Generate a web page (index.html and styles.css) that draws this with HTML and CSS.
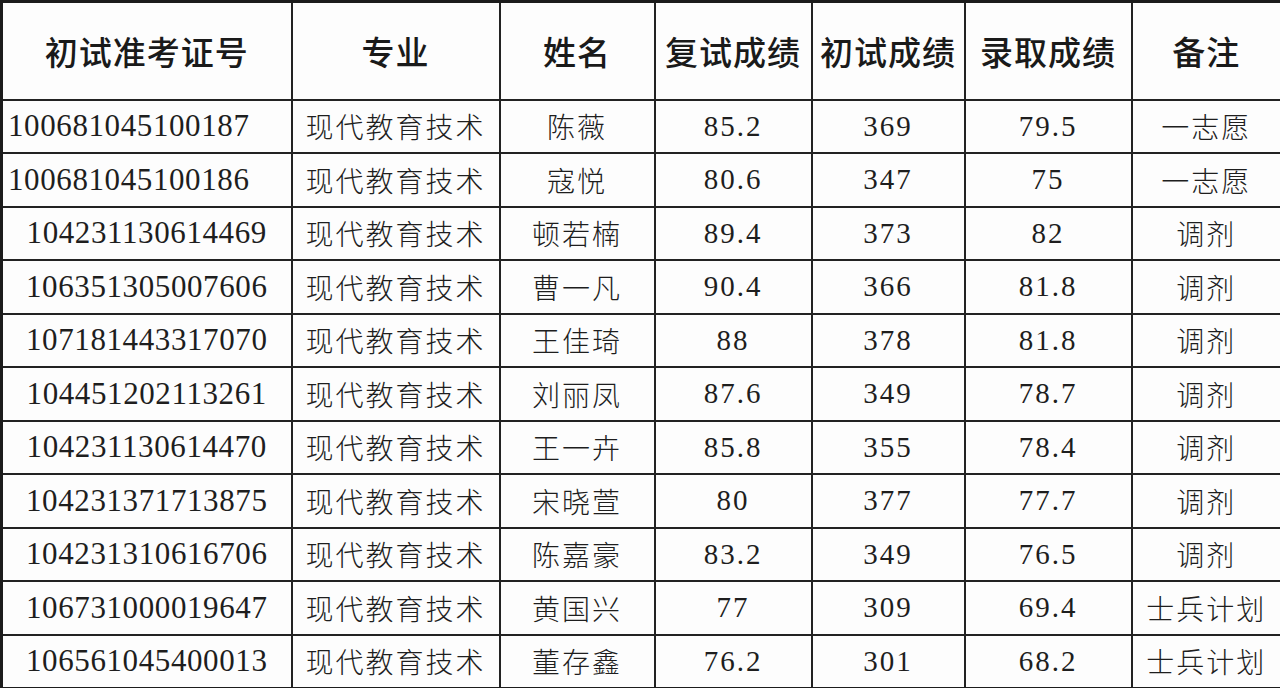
FILE: index.html
```html
<!DOCTYPE html>
<html lang="zh-CN">
<head>
<meta charset="utf-8">
<title>录取名单</title>
<link rel="stylesheet" href="styles.css">
</head>
<body>
<table class="grid">
  <colgroup>
    <col class="c1"><col class="c2"><col class="c3"><col class="c4"><col class="c5"><col class="c6"><col class="c7">
  </colgroup>
  <thead>
    <tr class="head">
      <th>初试准考证号</th><th>专业</th><th>姓名</th><th>复试成绩</th><th>初试成绩</th><th>录取成绩</th><th>备注</th>
    </tr>
  </thead>
  <tbody>
    <tr><td class="id left">100681045100187</td><td class="cn">现代教育技术</td><td class="cn">陈薇</td><td class="num">85.2</td><td class="num">369</td><td class="num">79.5</td><td class="cn">一志愿</td></tr>
    <tr><td class="id left">100681045100186</td><td class="cn">现代教育技术</td><td class="cn">寇悦</td><td class="num">80.6</td><td class="num">347</td><td class="num">75</td><td class="cn">一志愿</td></tr>
    <tr><td class="id">104231130614469</td><td class="cn">现代教育技术</td><td class="cn">顿若楠</td><td class="num">89.4</td><td class="num">373</td><td class="num">82</td><td class="cn">调剂</td></tr>
    <tr><td class="id">106351305007606</td><td class="cn">现代教育技术</td><td class="cn">曹一凡</td><td class="num">90.4</td><td class="num">366</td><td class="num">81.8</td><td class="cn">调剂</td></tr>
    <tr><td class="id">107181443317070</td><td class="cn">现代教育技术</td><td class="cn">王佳琦</td><td class="num">88</td><td class="num">378</td><td class="num">81.8</td><td class="cn">调剂</td></tr>
    <tr><td class="id">104451202113261</td><td class="cn">现代教育技术</td><td class="cn">刘丽凤</td><td class="num">87.6</td><td class="num">349</td><td class="num">78.7</td><td class="cn">调剂</td></tr>
    <tr><td class="id">104231130614470</td><td class="cn">现代教育技术</td><td class="cn">王一卉</td><td class="num">85.8</td><td class="num">355</td><td class="num">78.4</td><td class="cn">调剂</td></tr>
    <tr><td class="id">104231371713875</td><td class="cn">现代教育技术</td><td class="cn">宋晓萱</td><td class="num">80</td><td class="num">377</td><td class="num">77.7</td><td class="cn">调剂</td></tr>
    <tr><td class="id">104231310616706</td><td class="cn">现代教育技术</td><td class="cn">陈嘉豪</td><td class="num">83.2</td><td class="num">349</td><td class="num">76.5</td><td class="cn">调剂</td></tr>
    <tr><td class="id">106731000019647</td><td class="cn">现代教育技术</td><td class="cn">黄国兴</td><td class="num">77</td><td class="num">309</td><td class="num">69.4</td><td class="cn">士兵计划</td></tr>
    <tr><td class="id">106561045400013</td><td class="cn">现代教育技术</td><td class="cn">董存鑫</td><td class="num">76.2</td><td class="num">301</td><td class="num">68.2</td><td class="cn">士兵计划</td></tr>
  </tbody>
</table>
</body>
</html>
```

FILE: styles.css
```css
html, body {
  margin: 0;
  padding: 0;
  background: #fdfdfd;
}

.grid {
  width: 1280px;
  height: 688px;
  border-collapse: collapse;
  table-layout: fixed;
  border: 3px solid #1c1c1c;
  color: #1e1e1e;
}

.c1 { width: 290px; }
.c2 { width: 208px; }
.c3 { width: 155px; }
.c4 { width: 157px; }
.c5 { width: 153px; }
.c6 { width: 167px; }
.c7 { width: 150px; }

.grid th,
.grid td {
  border: 2px solid #222;
  padding: 0;
  text-align: center;
  vertical-align: middle;
  white-space: nowrap;
  overflow: hidden;
}

.head {
  height: 98px;
}

.grid th {
  font-family: "Noto Sans CJK SC", "Noto Sans", sans-serif;
  font-weight: 500;
  font-size: 33px;
  letter-spacing: 1px;
  color: #1a1a1a;
}

.grid tbody tr {
  height: 53.5px;
}

.cn {
  font-family: "Noto Sans CJK SC", sans-serif;
  font-weight: 300;
  font-size: 28px;
  letter-spacing: 2px;
}

.id {
  font-family: "Liberation Serif", serif;
  font-size: 31px;
  letter-spacing: 0.6px;
}

.id.left {
  text-align: left;
  padding-left: 5px;
}

.num {
  font-family: "Liberation Serif", serif;
  font-size: 29px;
  letter-spacing: 2px;
}
```
